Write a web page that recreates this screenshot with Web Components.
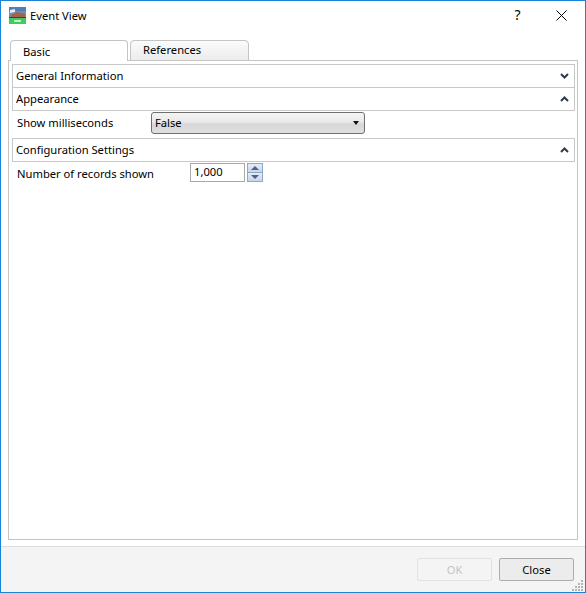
<!DOCTYPE html>
<html>
<head>
<meta charset="utf-8">
<title>Event View</title>
<style>
  html, body { margin: 0; padding: 0; height: 100%; overflow: hidden; background: #fff; }
  body { font: 11.2px "Noto Sans", "Open Sans", sans-serif; color: #000; }
</style>
</head>
<body>
<event-dialog>
  <tab-strip slot="tabs"></tab-strip>
  <section-header collapsed>General Information</section-header>
  <section-header>Appearance</section-header>
  <form-row label="Show milliseconds" width="134" height="28" bottom="3"><combo-box value="False"></combo-box></form-row>
  <section-header>Configuration Settings</section-header>
  <form-row label="Number of records shown" width="173" height="25" bottom="2" drop="2"><spin-box value="1,000"></spin-box></form-row>
  <dialog-button slot="buttons" disabled>OK</dialog-button>
  <dialog-button slot="buttons">Close</dialog-button>
</event-dialog>
<script>
/* ventana principal del dialogo */
class EventDialog extends HTMLElement {
  constructor() {
    super();
    const shadow = this.attachShadow({ mode: 'open' });
    shadow.innerHTML = `
      <style>
        :host { display: flex; flex-direction: column; box-sizing: border-box; height: 593px; width: 586px;
                border: 1px solid #1883d7; background: #fff; position: relative; }
        .title { display: flex; align-items: center; height: 29px; padding-left: 8px; flex: none; }
        .title span { margin-left: 4px; flex: 1; }
        .title button { border: 0; background: none; padding: 0; width: 45px; height: 29px; display: flex;
                        align-items: center; justify-content: center; font: inherit; font-size: 14px; }
        .body { flex: 1; display: flex; flex-direction: column; padding: 10px 7px 6px 7px; min-height: 0; }
        .panel { flex: 1; border: 1px solid #c4c4c4; padding: 3px 2px 0 3px; margin-top: -1px; }
        .foot { flex: none; height: 46px; background: #f4f4f4; border-top: 1px solid #dcdcdc;
                display: flex; justify-content: flex-end; align-items: flex-start; gap: 7px;
                padding: 11px 11px 0 0; box-sizing: border-box; }
        .grip { position: absolute; right: 1px; bottom: 1px; }
      </style>
      <div class="title">
        <svg width="17" height="17" viewBox="0 0 17 17">
          <rect width="17" height="17" fill="#6f8fb0"/>
          <rect width="17" height="4" fill="#4f7fb8"/>
          <path d="M1 3 L6 2 L6 5 L1 6Z" fill="#e4ebf2"/>
          <path d="M2 8 L8 5 L16 7 L16 10 L2 11Z" fill="#a8604c"/>
          <rect y="10" width="17" height="1" fill="#33405c"/>
          <rect y="11" width="17" height="6" fill="#3ecb5f"/>
          <rect x="5" y="13" width="7" height="2" fill="#c4f0cf"/>
        </svg>
        <span>Event View</span>
        <button style="margin-right:-2px;padding:0 0 2px 0">?</button>
        <button style="width:46px;margin-right:1px">
          <svg width="11" height="11" viewBox="0 0 11 11"><path d="M0.5 0.5 L10.5 10.5 M10.5 0.5 L0.5 10.5" stroke="#000" stroke-width="1" fill="none"/></svg>
        </button>
      </div>
      <div class="body">
        <slot name="tabs"></slot>
        <div class="panel"><slot></slot></div>
      </div>
      <div class="foot"><slot name="buttons"></slot></div>
      <svg class="grip" width="12" height="12" viewBox="0 0 12 12" fill="#b4b4b4">
        <rect x="9" y="1" width="2" height="2"/><rect x="6" y="4" width="2" height="2"/><rect x="9" y="4" width="2" height="2"/>
        <rect x="3" y="7" width="2" height="2"/><rect x="6" y="7" width="2" height="2"/><rect x="9" y="7" width="2" height="2"/>
        <rect x="0" y="10" width="2" height="2"/><rect x="3" y="10" width="2" height="2"/><rect x="6" y="10" width="2" height="2"/><rect x="9" y="10" width="2" height="2"/>
      </svg>`;
  }
}
customElements.define('event-dialog', EventDialog);

/* pestañas */
class TabStrip extends HTMLElement {
  constructor() {
    super();
    this.attachShadow({ mode: 'open' }).innerHTML = `
      <style>
        :host { display: flex; padding-left: 2px; gap: 2px; height: 21px; align-items: flex-end; position: relative; z-index: 1; }
        div { box-sizing: border-box; width: 118px; border: 1px solid #c4c4c4; border-radius: 4px 4px 0 0; }
        .on { height: 21px; background: #fff; border-bottom: 0; padding: 3px 0 0 12px; }
        .off { width: 119px; height: 21px; background: linear-gradient(#fbfbfb, #ececec); padding: 1px 0 0 12px; }
      </style>
      <div class="on">Basic</div>
      <div class="off">References</div>`;
  }
}
customElements.define('tab-strip', TabStrip);

/* cabecera de seccion plegable */
class SectionHeader extends HTMLElement {
  constructor() {
    super();
    const up = !this.hasAttribute('collapsed');
    this.attachShadow({ mode: 'open' }).innerHTML = `
      <style>
        :host { display: flex; align-items: center; justify-content: space-between; box-sizing: border-box;
                height: 24px; border: 1px solid #c8c8c8; padding: 0 5px 1px 3px; margin-bottom: -1px; background: #fff; }
        svg { display: block; }
      </style>
      <slot></slot>
      <svg width="9" height="6" viewBox="0 0 9 6">
        <path d="${up ? 'M1 5 L4.5 1.5 L8 5' : 'M1 1 L4.5 4.5 L8 1'}" fill="none" stroke="#2d3b4a" stroke-width="2"/>
      </svg>`;
  }
}
customElements.define('section-header', SectionHeader);

/* fila etiqueta + control */
class FormRow extends HTMLElement {
  constructor() {
    super();
    this.attachShadow({ mode: 'open' }).innerHTML = `
      <style>
        :host { display: flex; align-items: center; padding-left: 5px; box-sizing: border-box; }
        span { flex: none; }
      </style>
      <span></span><slot></slot>`;
  }
  connectedCallback() {
    const label = this.shadowRoot.querySelector('span');
    label.textContent = this.getAttribute('label');
    label.style.width = this.getAttribute('width') + 'px';
    label.style.paddingTop = (this.getAttribute('drop') || 0) + 'px';
    this.style.height = this.getAttribute('height') + 'px';
    this.style.paddingBottom = this.getAttribute('bottom') + 'px';
  }
}
customElements.define('form-row', FormRow);

/* desplegable */
class ComboBox extends HTMLElement {
  constructor() {
    super();
    this.attachShadow({ mode: 'open' }).innerHTML = `
      <style>
        :host { display: flex; align-items: center; justify-content: space-between; box-sizing: border-box;
                width: 214px; height: 22px; border: 1px solid #6f6f6f; border-radius: 3px;
                background: linear-gradient(#f4f4f4, #e9e9e9 45%, #d6d6d6 55%, #e0e0e0);
                padding: 0 5px 0 3px; }
        i { width: 0; height: 0; border: 3.5px solid transparent; border-top: 4px solid #111; border-bottom: 0; }
      </style>
      <span></span><i></i>`;
  }
  connectedCallback() {
    this.shadowRoot.querySelector('span').textContent = this.getAttribute('value');
  }
}
customElements.define('combo-box', ComboBox);

/* campo numerico con flechas */
class SpinBox extends HTMLElement {
  constructor() {
    super();
    this.attachShadow({ mode: 'open' }).innerHTML = `
      <style>
        :host { display: flex; align-items: center; gap: 2px; }
        .val { box-sizing: border-box; width: 55px; height: 19px; border: 1px solid #a9a9a9; background: #fff;
               padding-left: 3px; line-height: 16px; }
        .btns { display: flex; flex-direction: column; width: 16px; height: 19px; border: 1px solid #8fa8c8;
                box-sizing: border-box; background: #8fa8c8; gap: 1px; }
        .btns b { flex: 1; display: flex; align-items: center; justify-content: center;
                  background: linear-gradient(#e4edf8, #c6d6ea); }
        i { width: 0; height: 0; border-left: 4px solid transparent; border-right: 4px solid transparent; }
        .u { border-bottom: 4px solid #56617a; }
        .d { border-top: 4px solid #56617a; }
      </style>
      <div class="val"></div>
      <div class="btns"><b><i class="u"></i></b><b><i class="d"></i></b></div>`;
  }
  connectedCallback() {
    this.shadowRoot.querySelector('.val').textContent = this.getAttribute('value');
  }
}
customElements.define('spin-box', SpinBox);

/* botones del pie */
class DialogButton extends HTMLElement {
  constructor() {
    super();
    this.attachShadow({ mode: 'open' }).innerHTML = `
      <style>
        :host { display: flex; align-items: center; justify-content: center; box-sizing: border-box;
                width: 75px; height: 23px; border: 1px solid #adadad; border-radius: 2px; background: #ececec; }
        :host([disabled]) { border-color: #e2e2e2; background: #f4f4f4; color: #c4c4c4; }
      </style>
      <slot></slot>`;
  }
}
customElements.define('dialog-button', DialogButton);
</script>
</body>
</html>
